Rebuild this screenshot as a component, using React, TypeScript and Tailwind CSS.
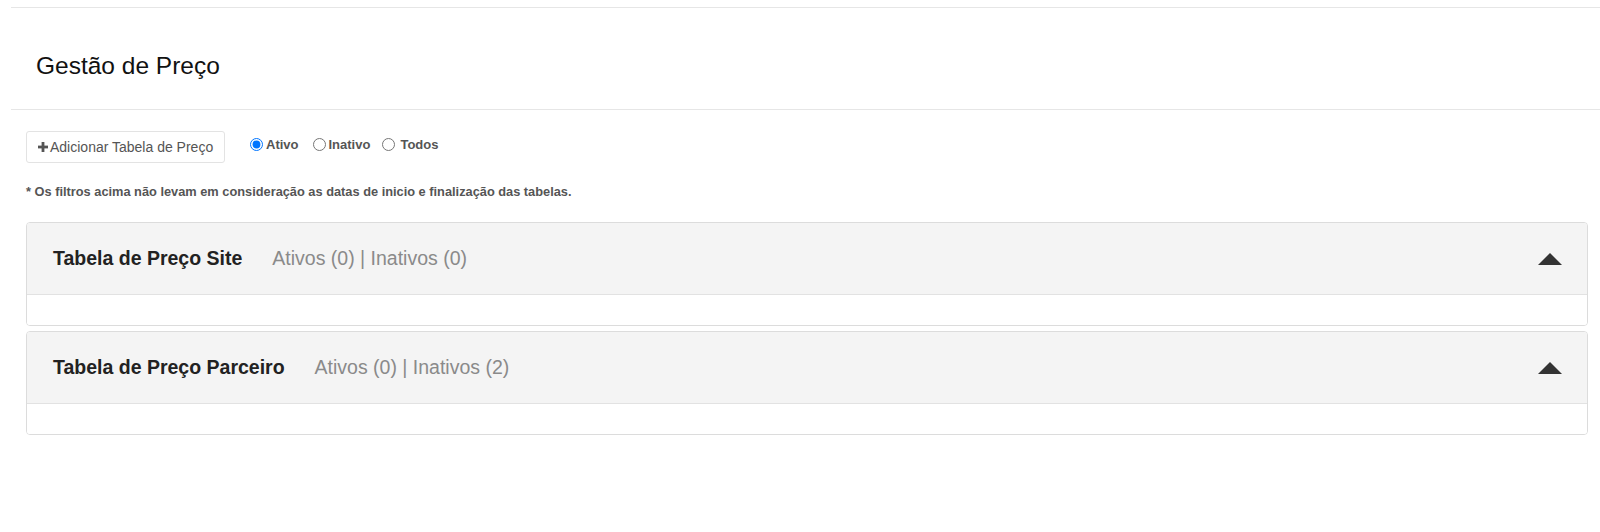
import React from "react";

function Panel({ title, status }: { title: string; status: string }) {
  return (
    <div className="border border-[#dcdcdc] rounded-[4px] overflow-hidden">
      <div className="h-[72px] bg-[#f4f4f4] border-b border-[#e2e2e2] flex items-center pl-[26px] pr-[25px]">
        <span className="text-[19.5px] font-bold text-[#222]">{title}</span>
        <span className="text-[19.5px] text-[#8a8a8a] ml-[30px]">{status}</span>
        <div className="ml-auto w-0 h-0 border-l-[12px] border-r-[12px] border-b-[12px] border-l-transparent border-r-transparent border-b-[#333]" />
      </div>
      <div className="h-[30px] bg-white" />
    </div>
  );
}

export default function App() {
  return (
    <div className="min-h-[532px] bg-white font-['Liberation_Sans',Arial,sans-serif] pl-[11px]">
      <div className="h-[8px] border-b border-[#e6e6e6]" />
      <div className="h-[102px] border-b border-[#e6e6e6] pt-[46px] pl-[25px]">
        <h1 className="text-[24.5px] leading-[24px] text-[#111]">Gestão de Preço</h1>
      </div>
      <div className="pl-[15px] pr-[12px]">
        <div className="flex items-center pt-[21px]">
          <button className="h-[32px] w-[199px] border border-[#e3e3e3] rounded-[3px] bg-white flex items-center pl-[11px] text-[14px] text-[#555]">
            <svg width="10" height="10" viewBox="0 0 10 10" className="mr-[2px]">
              <rect x="3.6" y="0" width="2.8" height="10" fill="#555" />
              <rect x="0" y="3.6" width="10" height="2.8" fill="#555" />
            </svg>
            Adicionar Tabela de Preço
          </button>
          <div className="flex items-center ml-[25px] -mt-[5px] text-[13px] font-bold text-[#555]">
            <label className="flex items-center">
              <input type="radio" name="f" defaultChecked className="m-0 w-[13px] h-[13px]" />
              <span className="ml-[3px]">Ativo</span>
            </label>
            <label className="flex items-center ml-[14px]">
              <input type="radio" name="f" className="m-0 w-[13px] h-[13px]" />
              <span className="ml-[3px]">Inativo</span>
            </label>
            <label className="flex items-center ml-[12px]">
              <input type="radio" name="f" className="m-0 w-[13px] h-[13px]" />
              <span className="ml-[5px]">Todos</span>
            </label>
          </div>
        </div>
        <p className="mt-[21px] text-[12.8px] font-bold text-[#555] leading-[15px]">
          * Os filtros acima não levam em consideração as datas de inicio e finalização das tabelas.
        </p>
        <div className="mt-[23px] flex flex-col gap-[5px]">
          <Panel title="Tabela de Preço Site" status="Ativos (0) | Inativos (0)" />
          <Panel title="Tabela de Preço Parceiro" status="Ativos (0) | Inativos (2)" />
        </div>
      </div>
    </div>
  );
}
